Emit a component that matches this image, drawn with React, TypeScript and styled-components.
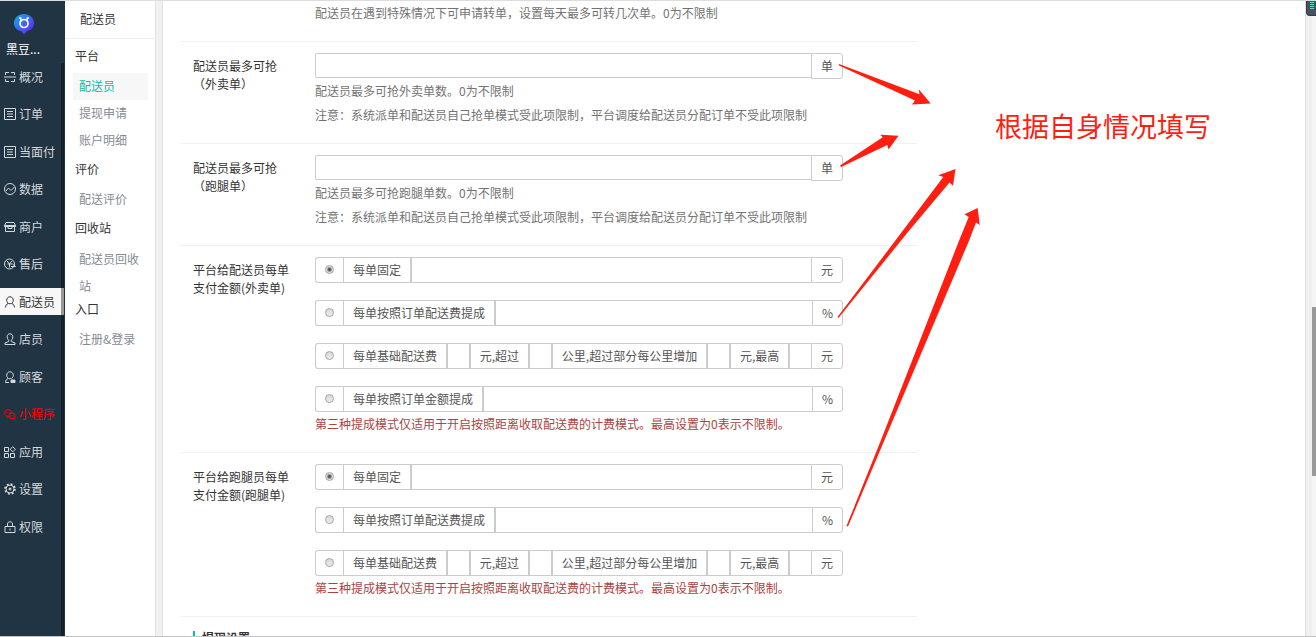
import React from "react";
import styled, { createGlobalStyle } from "styled-components";

const GlobalStyle = createGlobalStyle`
  *, *::before, *::after { box-sizing: border-box; }
  body {
    margin: 0;
    overflow: hidden;
    color: #333;
    background: #fff;
    font: 12px/18px "Noto Sans CJK SC", "Noto Sans", sans-serif;
  }
  a { color: inherit; text-decoration: none; }
  ul { margin: 0; padding: 0; list-style: none; }
`;

const Page = styled.div`
  position: relative;
  display: flex;
  height: 100vh;
  overflow: hidden;
  border-top: 1px solid #ddd;
  border-bottom: 1px solid #c3c3c3;
`;

/* Dark primary navigation */
const Sidebar = styled.nav`
  display: flex;
  flex: none;
  flex-direction: column;
  width: 65px;
  color: #d5d9dc;
  background: #213443;
`;

const Brand = styled.a`
  display: flex;
  flex-direction: column;
  height: 62px;
  padding-top: 12px;
  color: #fff;
`;

const BrandLogo = styled.svg`
  width: 22px;
  height: 22px;
  margin-left: 13px;
`;

const BrandName = styled.span`
  margin: 5px 0 0 6px;
`;

const MenuArea = styled.div`
  flex: 1;
  margin-right: 1px;
  border-right: 3px solid #14202a;
`;

const Menu = styled.ul`
  display: flex;
  flex-direction: column;
  justify-content: space-between;
  height: 477px;
  margin-right: -3px;
`;

const MenuLink = styled.a<{ $active?: boolean; $alert?: boolean }>`
  display: flex;
  align-items: center;
  gap: 3px;
  height: 27px;
  padding-left: 4px;
  white-space: nowrap;
  border-right: 3px solid ${(p) => (p.$active ? "#999" : "transparent")};
  color: ${(p) => (p.$active ? "#333" : p.$alert ? "#f00" : "inherit")};
  background: ${(p) => (p.$active ? "#f7f7f7" : "none")};
  background-clip: padding-box;
`;

const MenuIcon = styled.svg`
  flex: none;
  width: 12px;
  height: 12px;
  fill: none;
  stroke: currentColor;
  stroke-width: 1;
`;

/* Secondary navigation */
const SubNav = styled.nav`
  flex: none;
  width: 91px;
  background: #fff;
  border-right: 1px solid #e3e3e3;
`;

const SubHeader = styled.div`
  height: 38px;
  padding-left: 15px;
  line-height: 36px;
  border-bottom: 1px solid #eee;
`;

const SubGroups = styled.div`
  padding: 2px 7px 0 8px;
`;

const SubTitle = styled.div`
  height: 32px;
  padding-left: 2px;
  line-height: 30px;
`;

const SubLink = styled.a<{ $active?: boolean; $twoLine?: boolean }>`
  display: block;
  height: ${(p) => (p.$twoLine ? "49px" : "27px")};
  padding: 0 6px;
  line-height: ${(p) => (p.$twoLine ? "27px" : "25px")};
  color: ${(p) => (p.$active ? "#06bfa8" : "#858b93")};
  background: ${(p) => (p.$active ? "#f7f7f7" : "none")};
`;

const Gutter = styled.div`
  flex: none;
  width: 6px;
  background: #f1f1f1;
`;

/* Settings form */
const Main = styled.main`
  flex: 1;
  min-width: 0;
  overflow: hidden;
  padding-left: 17px;
  background: #fff;
  border-left: 1px solid #e3e3e3;
  border-right: 1px solid #e0e0e0;
`;

const Form = styled.form`
  max-width: 737px;
`;

const Row = styled.div`
  display: grid;
  grid-template-columns: 122px minmax(0, 528px);
  padding: 11px 0 16px 13px;
  border-top: 1px solid #f1f1f1;

  &:first-child {
    padding-top: 0;
    border-top: 0;
  }
`;

const RowLabel = styled.div`
  padding-top: 4px;
  line-height: 18px;
  white-space: pre-line;
`;

const Help = styled.div<{ $danger?: boolean }>`
  line-height: 24px;
  color: ${(p) => (p.$danger ? "#a94442" : "#737373")};
`;

const Group = styled.div`
  display: flex;
  height: 26px;

  & + & {
    margin-top: 17px;
  }
`;

const RadioCell = styled.span`
  display: flex;
  flex: none;
  justify-content: center;
  width: 28px;
  padding-top: 7px;
  border: 1px solid #ccc;
  border-right: 0;
  border-radius: 3px 0 0 3px;
`;

const Radio = styled.input`
  appearance: none;
  width: 9px;
  height: 9px;
  margin: 0;
  border: 1px solid #a5a5a5;
  border-radius: 50%;
  background: linear-gradient(#d8d8d8, #ececec);

  &:checked {
    background: radial-gradient(circle, #555 0 1px, #e0e0e0 3px);
  }
`;

const Addon = styled.label`
  flex: none;
  padding: 0 9px;
  line-height: 23px;
  white-space: nowrap;
  color: #555;
  border: 1px solid #ccc;
`;

const Unit = styled(Addon)`
  border-radius: 0 3px 3px 0;
`;

const Field = styled.input<{ $short?: boolean; $last?: boolean }>`
  flex: 1;
  width: 0;
  min-width: 0;
  height: ${(p) => (p.$short ? "25px" : "26px")};
  padding: 0 8px;
  font: inherit;
  color: #555;
  background: #fff;
  border: 1px solid #ccc;
  border-right-width: ${(p) => (p.$last ? "0" : "1px")};
  border-radius: ${(p) => (p.$short ? "2px 0 0 2px" : "0")};
  outline: 0;
`;

const Section = styled.section`
  padding: 14px 0 0 13px;
  border-top: 1px solid #f1f1f1;
`;

const SectionTitle = styled.h2`
  margin: 0;
  padding-left: 7px;
  font-size: 12px;
  line-height: 14px;
  border-left: 2px solid #00c1a7;
`;

/* Page scroll rail */
const Rail = styled.div`
  flex: none;
  width: 10px;
  padding: 306px 0 0 6px;
  background: linear-gradient(90deg, #f0f0f0 6px, #f5f5f5 6px);
`;

const Thumb = styled.div`
  height: 169px;
  background: #999;
`;

/* Things lying over the page */
const Overlay = styled.svg`
  position: absolute;
  top: -1px;
  left: 0;
  width: 1000px;
  height: 600px;
  fill: #ff1e10;
  pointer-events: none;
`;

const Note = styled.p`
  position: absolute;
  top: 107px;
  left: 995px;
  margin: 0;
  font-size: 27px;
  line-height: 36px;
  white-space: nowrap;
  color: #ff1e10;
`;

const Meter = styled.div`
  position: absolute;
  top: -1px;
  right: 0;
  width: 10px;
  height: 16px;
  padding: 0 2px 0 3px;
  background: #4b5060;
  border: solid #343846;
  border-width: 0 0 1px 1px;
  border-radius: 0 0 0 4px;
`;

const MeterBars = styled.div`
  height: 9px;
  background: repeating-linear-gradient(#5fe3b5 0 1px, #4b5060 1px 2px);
`;

type MenuItem = { label: string; icon: React.ReactNode; active?: boolean; alert?: boolean };

const listIcon = <path d="M.5.5h11v11H.5zM3 3.500h6M3 6h6M3 8.500h6" />;

const menu: MenuItem[] = [
  { label: "概况", icon: <path d="M1.500 4V1.500H5M7 1.500h3.500V4M0 6h12M1.500 8v2.500H5M7 10.500h3.500V8" /> },
  { label: "订单", icon: listIcon },
  { label: "当面付", icon: listIcon },
  { label: "数据", icon: <><circle cx="6" cy="6" r="5.500" /><path d="M2 8l2.500-3 2.500 2.500L10.500 4" /></> },
  { label: "商户", icon: <path d="M2 1.500h8l1.500 3v1h-11v-1zM1.500 6v4.500h9V6M.5 4.500h11M4 5v2.500h4V5" /> },
  { label: "售后", icon: <><circle cx="5.500" cy="6" r="5" /><path d="M3 3l2.500 3L8 3M3.500 6h5M5.500 6v3.500M7 8.500h4.500M9 6.500l2.500 2" /></> },
  {
    label: "配送员",
    active: true,
    icon: <path d="M6 .8c2 0 3.300 1.500 3.300 3.400S8 7.800 6 7.800 2.700 6.100 2.700 4.200 4 .8 6 .8zM4 7.500C2.500 8.200 1.700 9.500 1.500 11.500M8 7.500c1.500.7 2.300 2 2.500 4" />,
  },
  {
    label: "店员",
    icon: <path d="M6 .8c1.800 0 2.800 1.200 2.800 3S8 6.500 7.300 7.200V8.500l3.700 1.500v1.500H1V10l3.700-1.500V7.200C4 6.500 3.200 5.600 3.200 3.800S4.200.8 6 .8z" />,
  },
  {
    label: "顾客",
    icon: <><path d="M6 .8c2 0 3.300 1.500 3.300 3.400S8 7.800 6 7.800 2.700 6.100 2.700 4.200 4 .8 6 .8zM4 7.500C2.500 8.200 1.700 9.500 1.500 11.500H5" /><path d="M7 9h4v2.500H7z" fill="currentColor" /></>,
  },
  {
    label: "小程序",
    alert: true,
    icon: <><path d="M6.500 8.500L3 9.500 2.800 8C-.6 6 .2 2 4 1.800c2.300 0 3.900 1.300 4 3" /><ellipse cx="8" cy="7.800" rx="3.300" ry="2.800" /><path d="M9 10.500l1.800.9V9.500M3 4v1M5.500 4v1M7 7v1M9.200 7v1" /></>,
  },
  {
    label: "应用",
    icon: <><path d="M.5 1.500h4v4h-4zM.5 7.500h4v4h-4zM6.500 7.500h4v4h-4z" /><path d="M8.800.7l2.600 2.600-2.600 2.600-2.600-2.600z" /></>,
  },
  {
    label: "设置",
    icon: <><circle cx="6" cy="6" r="4" /><circle cx="6" cy="6" r="5" strokeWidth="1.600" strokeDasharray="1.960 1.960" /><circle cx="6" cy="6" r="1" fill="currentColor" /></>,
  },
  { label: "权限", icon: <path d="M1 5.500h10v6H1zM3.500 5.500V3c0-3 5-3 5 0v2.500M6 7.500v2" /> },
];

type SubItem = { label: string; active?: boolean; twoLine?: boolean };

const subNav: { title: string; items: SubItem[] }[] = [
  { title: "平台", items: [{ label: "配送员", active: true }, { label: "提现申请" }, { label: "账户明细" }] },
  { title: "评价", items: [{ label: "配送评价" }] },
  { title: "回收站", items: [{ label: "配送员回收站", twoLine: true }] },
  { title: "入口", items: [{ label: "注册&登录" }] },
];

/* Each payment mode is a list of captions; a text box follows every caption. */
type PayMode = { captions: string[]; unit: string };

const fixedFee: PayMode = { captions: ["每单固定"], unit: "元" };
const deliveryShare: PayMode = { captions: ["每单按照订单配送费提成"], unit: "%" };
const distanceFee: PayMode = {
  captions: ["每单基础配送费", "元,超过", "公里,超过部分每公里增加", "元,最高"],
  unit: "元",
};
const orderShare: PayMode = { captions: ["每单按照订单金额提成"], unit: "%" };

function LimitRow({ id, kind }: { id: string; kind: string }) {
  return (
    <Row>
      <RowLabel as="label" htmlFor={id}>{`配送员最多可抢\n（${kind}单）`}</RowLabel>
      <div>
        <Group>
          <Field id={id} type="text" $short $last />
          <Unit htmlFor={id}>单</Unit>
        </Group>
        <Help>配送员最多可抢{kind}单数。0为不限制</Help>
        <Help>注意：系统派单和配送员自己抢单模式受此项限制，平台调度给配送员分配订单不受此项限制</Help>
      </div>
    </Row>
  );
}

function PayRow({ name, label, modes }: { name: string; label: string; modes: PayMode[] }) {
  return (
    <Row role="radiogroup" aria-label={label}>
      <RowLabel>{label}</RowLabel>
      <div>
        {modes.map((mode, i) => {
          const id = `${name}-${i}`;
          const last = mode.captions.length - 1;
          return (
            <Group key={id}>
              <RadioCell>
                <Radio type="radio" id={id} name={name} defaultChecked={i === 0} />
              </RadioCell>
              {mode.captions.map((caption, j) => (
                <React.Fragment key={caption}>
                  <Addon htmlFor={j === 0 ? id : `${id}-value-${j}`}>{caption}</Addon>
                  <Field id={`${id}-value-${j}`} type="text" aria-label={caption} $last={j === last} />
                </React.Fragment>
              ))}
              <Unit htmlFor={`${id}-value-${last}`}>{mode.unit}</Unit>
            </Group>
          );
        })}
        <Help $danger>第三种提成模式仅适用于开启按照距离收取配送费的计费模式。最高设置为0表示不限制。</Help>
      </div>
    </Row>
  );
}

export default function App() {
  return (
    <>
      <GlobalStyle />
      <Page>
        <Sidebar>
          <Brand href="#">
            <BrandLogo viewBox="0 0 22 22" aria-hidden="true">
              <defs>
                <linearGradient id="pin" x1="0" y1="0" x2="1" y2="1">
                  <stop offset=".2" stopColor="#1e93f2" />
                  <stop offset=".8" stopColor="#5f35f5" />
                </linearGradient>
              </defs>
              <path d="M11 1c5.600 0 10 3.900 10 9 0 4.400-3.200 7.400-7.400 8.300L11 21.500l-2.600-3.200C4.200 17.400 1 14.400 1 10c0-5.100 4.400-9 10-9z" fill="url(#pin)" />
              <circle cx="11" cy="10.500" r="4" fill="none" stroke="#fff" strokeWidth="1.700" />
              <path d="M6 5h1.800v3.500M16 5h-1.800v3.500" fill="none" stroke="#fff" strokeWidth="1.300" />
            </BrandLogo>
            <BrandName>黑豆...</BrandName>
          </Brand>
          <MenuArea>
            <Menu>
              {menu.map((item) => (
                <li key={item.label}>
                  <MenuLink href="#" $active={item.active} $alert={item.alert}>
                    <MenuIcon viewBox="0 0 12 12" aria-hidden="true">{item.icon}</MenuIcon>
                    {item.label}
                  </MenuLink>
                </li>
              ))}
            </Menu>
          </MenuArea>
        </Sidebar>

        <SubNav>
          <SubHeader>配送员</SubHeader>
          <SubGroups>
            {subNav.map((group) => (
              <div key={group.title}>
                <SubTitle>{group.title}</SubTitle>
                {group.items.map((item) => (
                  <SubLink key={item.label} href="#" $active={item.active} $twoLine={item.twoLine}>
                    {item.label}
                  </SubLink>
                ))}
              </div>
            ))}
          </SubGroups>
        </SubNav>

        <Gutter />

        <Main>
          <Form>
            <Row>
              <RowLabel />
              <Help>配送员在遇到特殊情况下可申请转单，设置每天最多可转几次单。0为不限制</Help>
            </Row>
            <LimitRow id="takeout-limit" kind="外卖" />
            <LimitRow id="errand-limit" kind="跑腿" />
            <PayRow
              name="takeout-pay"
              label={"平台给配送员每单\n支付金额(外卖单)"}
              modes={[fixedFee, deliveryShare, distanceFee, orderShare]}
            />
            <PayRow
              name="errand-pay"
              label={"平台给跑腿员每单\n支付金额(跑腿单)"}
              modes={[fixedFee, deliveryShare, distanceFee]}
            />
            <Section>
              <SectionTitle>提现设置</SectionTitle>
            </Section>
          </Form>
        </Main>

        <Rail>
          <Thumb />
        </Rail>

        <Overlay viewBox="0 0 1000 600" aria-hidden="true">
          <path d="M839 64L919.500 94.300 918.700 89.300 930.700 103.500 912 104.500 915 100.500 839 65.500z" />
          <path d="M840 165.500L882.700 137.300 880.300 134.700 898.500 135.700 888.500 149.500 887.300 145 841 167z" />
          <path d="M837.500 317L903.300 230 943.300 177 938.300 175.300 955.500 169 953 185.700 949.500 182.500 909.600 230 838.500 318z" />
          <path d="M846.500 526L881 440 959.300 240 968.700 217 964.500 214.300 977.700 208 979.700 225 976 222.500 969.300 240 884.500 440 848 526.500z" />
        </Overlay>
        <Note>根据自身情况填写</Note>
        <Meter>
          <MeterBars />
        </Meter>
      </Page>
    </>
  );
}
